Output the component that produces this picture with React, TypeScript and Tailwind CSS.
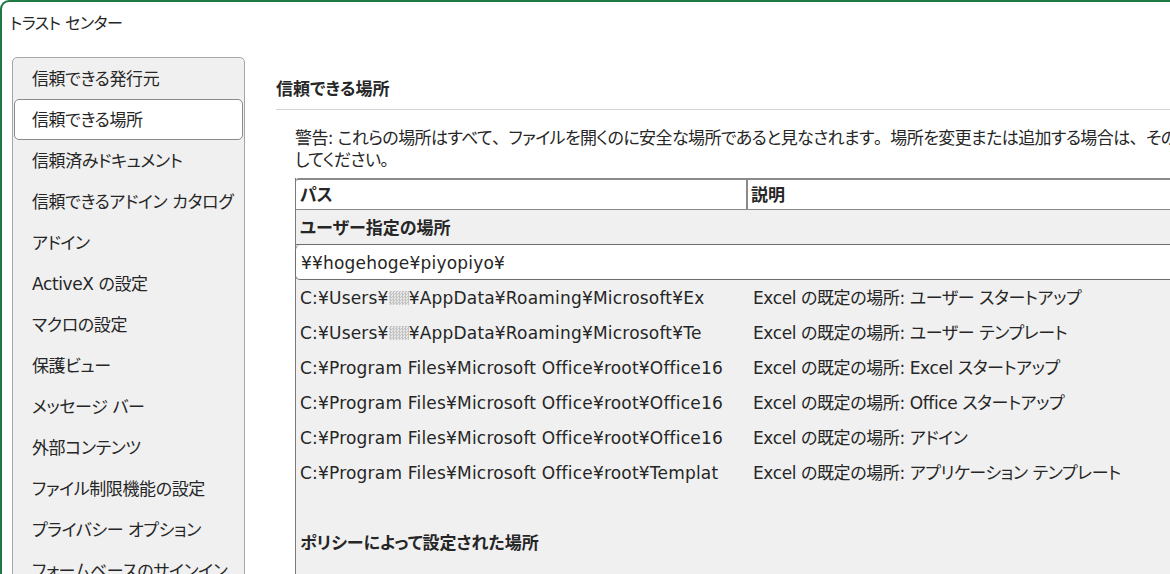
import React from "react";

const navItems = [
  "信頼できる発行元",
  "信頼できる場所",
  "信頼済みドキュメント",
  "信頼できるアドイン カタログ",
  "アドイン",
  "ActiveX の設定",
  "マクロの設定",
  "保護ビュー",
  "メッセージ バー",
  "外部コンテンツ",
  "ファイル制限機能の設定",
  "プライバシー オプション",
  "フォームベースのサインイン",
];

type Row = { path: React.ReactNode; desc: string };

// Small dithered patch standing in for a hidden user name
function Masked() {
  return (
    <span className="inline-block h-[14px] w-[20px] align-[-1px] bg-[repeating-conic-gradient(#b8b8b8_0%_25%,#e6e6e6_0%_50%)] bg-[length:3px_3px] opacity-80" />
  );
}

// Full-width punctuation (kept at its natural em width)
function P({ c }: { c: string }) {
  return <span className="[font-feature-settings:normal]">{c}</span>;
}

const rows: Row[] = [
  {
    path: (
      <>
        C:¥Users¥<Masked />¥AppData¥Roaming¥Microsoft¥Ex
      </>
    ),
    desc: "Excel の既定の場所: ユーザー スタートアップ",
  },
  {
    path: (
      <>
        C:¥Users¥<Masked />¥AppData¥Roaming¥Microsoft¥Te
      </>
    ),
    desc: "Excel の既定の場所: ユーザー テンプレート",
  },
  { path: "C:¥Program Files¥Microsoft Office¥root¥Office16", desc: "Excel の既定の場所: Excel スタートアップ" },
  { path: "C:¥Program Files¥Microsoft Office¥root¥Office16", desc: "Excel の既定の場所: Office スタートアップ" },
  { path: "C:¥Program Files¥Microsoft Office¥root¥Office16", desc: "Excel の既定の場所: アドイン" },
  { path: "C:¥Program Files¥Microsoft Office¥root¥Templat", desc: "Excel の既定の場所: アプリケーション テンプレート" },
];

export default function App() {
  return (
    <div
      className="h-[574px] w-[1170px] overflow-hidden bg-white text-[#262626] [font-feature-settings:'palt']"
      style={{ fontFamily: '"DejaVu Sans", "Noto Sans CJK JP", sans-serif' }}
    >
      <div className="h-[620px] rounded-tl-[9px] border-l-2 border-t-2 border-[#1d7a45]">
        {/* window title */}
        <div className="flex h-[40px] items-center whitespace-nowrap pl-[8px] pt-[3px] text-[16px] leading-none tracking-[-0.5px]">
          トラスト センター
        </div>

        <div className="flex pt-[15px]">
          {/* category list */}
          <div className="ml-[10px] h-[560px] w-[233px] shrink-0 rounded-t-[5px] border border-[#a6a6a6] bg-[#f0f0f0] px-px text-[17px] tracking-[-0.4px]">
            {navItems.map((item, i) =>
              i === 1 ? (
                <div
                  key={item}
                  className="flex h-[41px] items-center whitespace-nowrap rounded-[5px] border border-[#8a8a8a] bg-white pl-[17px] pt-[2px]"
                >
                  {item}
                </div>
              ) : (
                <div key={item} className="flex h-[41px] items-center whitespace-nowrap pl-[18px] pt-[2px]">
                  {item}
                </div>
              )
            )}
          </div>

          {/* trusted locations panel */}
          <div className="ml-[31px] min-w-0 flex-1 overflow-hidden text-[17px]">
            <div className="h-[52px] whitespace-nowrap pt-[22px] font-bold leading-[20px]">信頼できる場所</div>
            <div className="h-px bg-[#d4d4d4]" />
            <div className="ml-[19px] mt-[17px] whitespace-nowrap leading-[22px] tracking-[-0.6px]">
              <div>
                警告: これらの場所はすべて<P c="、" />ファイルを開くのに安全な場所であると見なされます<P c="。" />
                場所を変更または追加する場合は<P c="、" />その場所が安全であることを確認
              </div>
              <div>
                してください<P c="。" />
              </div>
            </div>

            <div className="ml-[19px] mt-[7px] w-[1000px] border-l border-[#7a7a7a] bg-[#f0f0f0]">
              {/* header */}
              <div className="flex h-[32px] rounded-tl-[3px] border-t-2 border-b border-[#8a8a8a] bg-white font-bold">
                <div className="flex w-[452px] items-center border-r-2 border-[#8a8a8a] pl-[4px] pt-[2px]">パス</div>
                <div className="flex items-center pl-[3px] pt-[2px]">説明</div>
              </div>

              <div className="flex h-[35px] items-center border-b border-[#6e6e6e] pl-[4px] pt-[3px] font-bold">
                ユーザー指定の場所
              </div>

              <div className="-ml-px flex h-[35px] items-center rounded-l-[5px] border border-t-0 border-[#6e6e6e] bg-white pl-[5px] pt-[3px] tracking-[0.2px]">
                ¥¥hogehoge¥piyopiyo¥
              </div>

              {rows.map((r, i) => (
                <div key={i} className="flex h-[35px] items-center whitespace-nowrap pt-[3px]">
                  <div className="w-[453px] overflow-hidden pl-[4px] tracking-[0.2px]">{r.path}</div>
                  <div className="pl-[4px] tracking-[-0.4px]">{r.desc}</div>
                </div>
              ))}

              <div className="h-[35px]" />
              <div className="flex h-[35px] items-center pl-[4px] pt-[3px] font-bold">ポリシーによって設定された場所</div>
              <div className="h-[40px]" />
            </div>
          </div>
        </div>
      </div>
    </div>
  );
}
